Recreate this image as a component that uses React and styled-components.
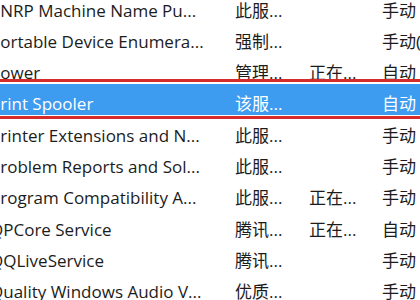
import React from "react";
import styled, { createGlobalStyle } from "styled-components";

const Global = createGlobalStyle`
  html, body { margin: 0; padding: 0; background: #ffffff; overflow: hidden; }
  body { width: 420px; height: 300px; }
`;

const Viewport = styled.div`
  position: relative;
  width: 420px;
  height: 300px;
  overflow: hidden;
  background: #ffffff;
`;

const List = styled.div`
  margin-top: -10px;
  margin-left: -10px;
  width: 480px;
  display: flex;
  flex-direction: column;
`;

const Row = styled.div`
  display: grid;
  grid-template-columns: 245px 74px 73px 1fr;
  height: 31.3px;
  box-sizing: border-box;
  padding-top: 6.6px;
  font-family: "Open Sans", "Noto Sans CJK SC", sans-serif;
  font-size: 17px;
  line-height: 27px;
  color: ${(p) => (p.$selected ? "#ffffff" : "#1c1c1c")};
  background: ${(p) => (p.$selected ? "#3d9bf0" : "transparent")};
`;

const Cell = styled.div`
  white-space: nowrap;
  overflow: hidden;
`;

const Marker = styled.div`
  position: absolute;
  left: -10px;
  right: -10px;
  top: 79px;
  height: 40px;
  box-sizing: border-box;
  border-top: 3px solid #d62b2b;
  border-bottom: 3px solid #d62b2b;
  pointer-events: none;
`;

const rows = [
  ["PNRP Machine Name Pu...", "此服...", "", "手动"],
  ["Portable Device Enumera...", "强制...", "", "手动(触发..."],
  ["Power", "管理...", "正在...", "自动"],
  ["Print Spooler", "该服...", "", "自动", true],
  ["Printer Extensions and N...", "此服...", "", "手动"],
  ["Problem Reports and Sol...", "此服...", "", "手动"],
  ["Program Compatibility A...", "此服...", "正在...", "手动"],
  ["QPCore Service", "腾讯...", "正在...", "自动"],
  ["QQLiveService", "腾讯...", "", "手动"],
  ["Quality Windows Audio V...", "优质...", "", "手动"],
];

export default function App() {
  return (
    <Viewport>
      <Global />
      <List>
        {rows.map(([name, desc, status, start, sel]) => (
          <Row key={name} $selected={sel}>
            <Cell>{name}</Cell>
            <Cell>{desc}</Cell>
            <Cell>{status}</Cell>
            <Cell>{start}</Cell>
          </Row>
        ))}
      </List>
      <Marker />
    </Viewport>
  );
}
